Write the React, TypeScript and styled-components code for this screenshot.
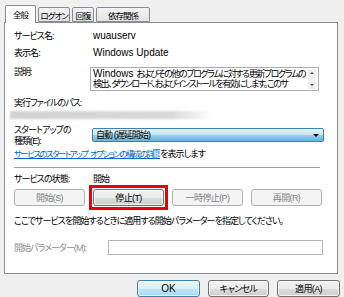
import React from 'react'
import styled, { createGlobalStyle, css } from 'styled-components'

const GlobalStyle = createGlobalStyle`
  html, body {
    margin: 0;
    padding: 0;
    background: #f0f0f0;
  }
  body {
    font-family: "Liberation Sans", "Noto Sans CJK JP", sans-serif;
    font-size: 9px;
    letter-spacing: -0.95px;
    font-feature-settings: "palt";
    color: #000;
  }
`

const Latin = styled.span`
  font-size: 10px;
  letter-spacing: 0;
`

const Window = styled.div`
  width: 344px;
  height: 297px;
  box-sizing: border-box;
  padding: 5px 4px 0 4px;
  display: flex;
  flex-direction: column;
  overflow: hidden;
`

const TabStrip = styled.div`
  display: flex;
  align-items: flex-end;
  gap: 2px;
  height: 17px;
  padding-left: 1px;
  position: relative;
  z-index: 1;
`

const Tab = styled.div<{ $active?: boolean; $w: number }>`
  box-sizing: border-box;
  width: ${(p) => p.$w}px;
  height: ${(p) => (p.$active ? 18 : 15)}px;
  margin-bottom: ${(p) => (p.$active ? -1 : 0)}px;
  border: 1px solid #898c95;
  border-bottom: ${(p) => (p.$active ? 'none' : '1px solid #898c95')};
  border-radius: 2px 2px 0 0;
  background: ${(p) => (p.$active ? '#fff' : 'linear-gradient(#f3f3f3, #e4e4e4)')};
  display: flex;
  align-items: center;
  justify-content: center;
  padding-bottom: ${(p) => (p.$active ? 2 : 0)}px;
  font-size: 8.5px;
  letter-spacing: -1px;
  white-space: nowrap;
`

const Panel = styled.div`
  box-sizing: border-box;
  width: 334px;
  height: 254px;
  border: 1px solid #898c95;
  background: #fff;
  padding: 7px 14px 0 9px;
  display: flex;
  flex-direction: column;
`

const Row = styled.div<{ $h: number; $top: number; $label?: number }>`
  display: grid;
  grid-template-columns: ${(p) => p.$label ?? 76}px 1fr;
  align-items: center;
  height: ${(p) => p.$h}px;
  margin-top: ${(p) => p.$top}px;
  line-height: 12px;
  white-space: nowrap;
`

const Label = styled.div<{ $top?: boolean; $disabled?: boolean }>`
  align-self: ${(p) => (p.$top ? 'start' : 'center')};
  line-height: ${(p) => (p.$top ? '11px' : '12px')};
  color: ${(p) => (p.$disabled ? '#8d8d8d' : '#000')};
`

const Value = styled.div`
  padding-left: 3px;
`

const TextLine = styled.div<{ $top: number; $h: number }>`
  margin-top: ${(p) => p.$top}px;
  height: ${(p) => p.$h}px;
  line-height: ${(p) => p.$h}px;
  white-space: nowrap;
`

const DescBox = styled.div`
  align-self: stretch;
  margin-right: 4px;
  border: 1px solid #abadb3;
  display: flex;
  overflow: hidden;
`

const DescText = styled.div`
  flex: 1;
  padding: 1px 0 0 2px;
  line-height: 10px;
  overflow: hidden;
  div {
    white-space: nowrap;
    overflow: hidden;
    letter-spacing: -1.4px;
  }
`

const ScrollBar = styled.div`
  width: 8px;
  margin: 1px 2px 1px 0;
  background: #f0f0f0;
  display: flex;
  flex-direction: column;
  justify-content: space-between;
  align-items: center;
  padding: 3px 0;
  box-sizing: border-box;
`

const Arrow = styled.span<{ $up?: boolean }>`
  width: 0;
  height: 0;
  border-left: 2px solid transparent;
  border-right: 2px solid transparent;
  ${(p) =>
    p.$up
      ? css`border-bottom: 2px solid #4d4d4d;`
      : css`border-top: 2px solid #4d4d4d;`}
`

const BlurredPath = styled.div`
  margin: 2px 0 0 -4px;
  width: 203px;
  height: 8px;
  background: linear-gradient(to right, #d2d2d2 0%, #d9d9d9 80%, rgba(225, 225, 225, 0) 100%);
  filter: blur(1px);
`

const Select = styled.div`
  align-self: start;
  margin: 3px -1px 0 2px;
  height: 14px;
  box-sizing: border-box;
  border: 1px solid #3c7fb1;
  border-radius: 2px;
  background: linear-gradient(#e5f4fc 0%, #c4e5f6 50%, #98d1ef 51%, #68b3db 100%);
  display: flex;
  align-items: center;
  justify-content: space-between;
  padding: 0 4px 0 3px;
  line-height: 12px;
`

const SelectArrow = styled.span`
  width: 0;
  height: 0;
  border-left: 3px solid transparent;
  border-right: 3px solid transparent;
  border-top: 3px solid #000;
`

const Link = styled.span`
  color: #0066cc;
  text-decoration: underline;
  font-size: 8.5px;
  letter-spacing: -1.6px;
  word-spacing: 2px;
`

const Selected = styled.span`
  background: #3399ff;
  color: #fff;
`

const Separator = styled.div`
  margin-top: 7px;
  width: 306px;
  height: 0;
  border-top: 1px solid #a0a0a0;
`

const ButtonRow = styled.div`
  display: grid;
  grid-template-columns: repeat(4, 71px);
  gap: 8px;
  margin-top: 4px;
`

const Button = styled.button<{ $w?: number; $variant?: 'normal' | 'disabled' | 'default' }>`
  box-sizing: border-box;
  width: ${(p) => (p.$w ? `${p.$w}px` : '100%')};
  height: 17px;
  padding: 0;
  font: inherit;
  letter-spacing: -0.6px;
  font-feature-settings: "palt";
  line-height: 12px;
  border-radius: 3px;
  border: 1px solid #707070;
  color: #000;
  background: linear-gradient(#f2f2f2 0%, #ebebeb 50%, #dddddd 51%, #cfcfcf 100%);
  box-shadow: inset 0 0 0 1px rgba(255, 255, 255, 0.75);
  ${(p) =>
    p.$variant === 'disabled' &&
    css`
      border-color: #adb2b5;
      background: #f4f4f4;
      color: #838383;
      box-shadow: none;
    `}
  ${(p) =>
    p.$variant === 'default' &&
    css`
      border-color: #3c7fb1;
      background: linear-gradient(#eaf6fd 0%, #d9f0fc 50%, #bee6fd 51%, #a7d9f5 100%);
    `}
`

const Highlight = styled.div`
  position: relative;
  &::after {
    content: '';
    position: absolute;
    top: -4px;
    left: -4px;
    right: -4px;
    bottom: -4px;
    border: 3px solid #e60012;
    pointer-events: none;
  }
`

const Input = styled.div`
  height: 15px;
  box-sizing: border-box;
  border: 1px solid #b5b5b5;
  background: #fff;
`

const Footer = styled.div`
  display: flex;
  justify-content: flex-end;
  gap: 8px;
  margin-top: 6px;
`

export default function App() {
  return (
    <>
      <GlobalStyle />
      <Window>
        <TabStrip>
          <Tab $active $w={31}>全般</Tab>
          <Tab $w={32}>ログオン</Tab>
          <Tab $w={22}>回復</Tab>
          <Tab $w={54}>依存関係</Tab>
        </TabStrip>
        <Panel>
          <Row $h={12} $top={0}>
            <Label>サービス名:</Label>
            <Value><Latin>wuauserv</Latin></Value>
          </Row>
          <Row $h={12} $top={5}>
            <Label>表示名:</Label>
            <Value><Latin>Windows Update</Latin></Value>
          </Row>
          <Row $h={24} $top={8}>
            <Label $top>説明:</Label>
            <DescBox>
              <DescText>
                <div><Latin>Windows </Latin>およびその他のプログラムに対する更新プログラムの</div>
                <div>検出、ダウンロード、およびインストールを有効にします。このサ</div>
              </DescText>
              <ScrollBar>
                <Arrow $up />
                <Arrow />
              </ScrollBar>
            </DescBox>
          </Row>
          <TextLine $top={6} $h={12}>実行ファイルのパス:</TextLine>
          <BlurredPath />
          <Row $h={24} $top={6}>
            <Label $top>
              スタートアップの
              <br />
              種類(E):
            </Label>
            <Select>
              <span>自動 (遅延開始)</span>
              <SelectArrow />
            </Select>
          </Row>
          <TextLine $top={0} $h={11}>
            <Link>
              サービスのスタートアップ オプションの構成の詳<Selected>細</Selected>
            </Link>
            を表示します
          </TextLine>
          <Separator />
          <Row $h={12} $top={5}>
            <Label>サービスの状態:</Label>
            <Value>開始</Value>
          </Row>
          <ButtonRow>
            <Button $variant="disabled">開始(S)</Button>
            <Highlight>
              <Button>停止(T)</Button>
            </Highlight>
            <Button $variant="disabled">一時停止(P)</Button>
            <Button $variant="disabled">再開(R)</Button>
          </ButtonRow>
          <TextLine $top={9} $h={12}>
            ここでサービスを開始するときに適用する開始パラメーターを指定してください。
          </TextLine>
          <Row $h={15} $top={13} $label={94}>
            <Label $disabled>開始パラメーター(M):</Label>
            <Input />
          </Row>
        </Panel>
        <Footer>
          <Button $w={63} $variant="default"><Latin>OK</Latin></Button>
          <Button $w={61}>キャンセル</Button>
          <Button $w={63}>適用(A)</Button>
        </Footer>
      </Window>
    </>
  )
}
